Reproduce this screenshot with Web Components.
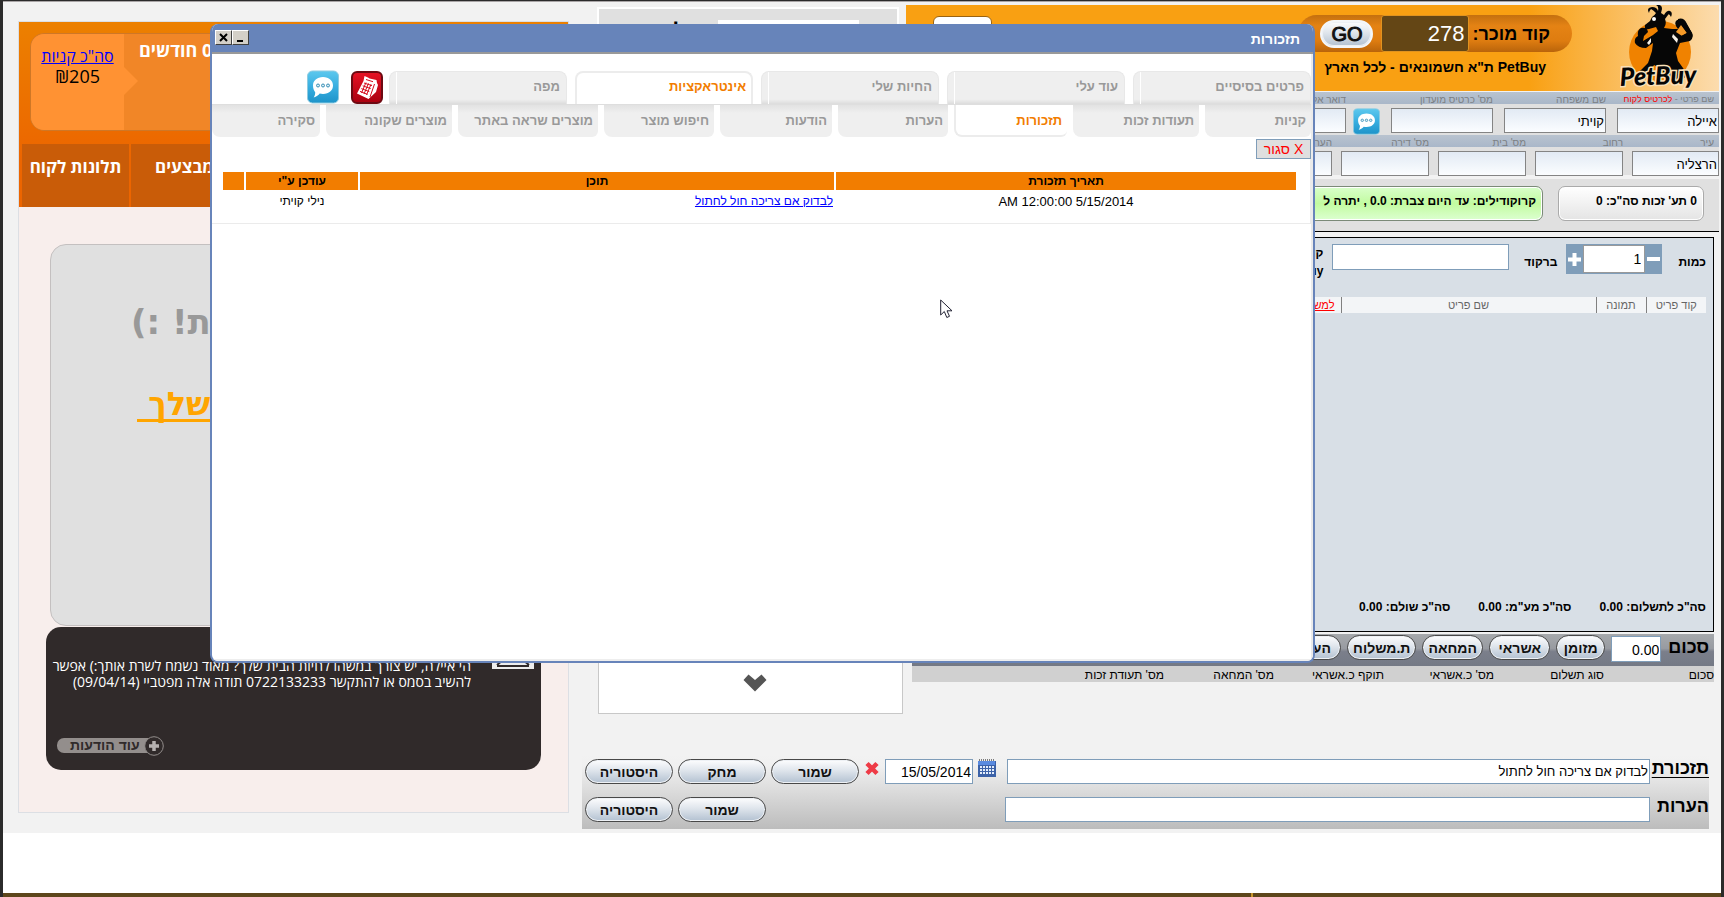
<!DOCTYPE html>
<html lang="he" dir="rtl">
<head>
<meta charset="utf-8">
<title>PetBuy</title>
<style>
html,body{margin:0;background:#fff}
body{font:13px/16px "Liberation Sans",Arial,sans-serif;color:#000}
</style>
</head>
<body>
<pet-app></pet-app>
<script>
const BASE = `*{box-sizing:border-box}button,input{font:inherit;color:inherit;margin:0}
input{border-radius:0;outline:0;min-width:0}h1,h2,p{margin:0;font:inherit}`;

function define(name, css, html) {
  const t = document.createElement('template');
  t.innerHTML = `<style>${BASE}${css}</style>${html}`;
  customElements.define(name, class extends HTMLElement {
    constructor() {
      super();
      this.attachShadow({mode: 'open'}).append(t.content.cloneNode(true));
    }
    connectedCallback() {
      const root = this.shadowRoot;
      root.querySelectorAll('[data-text]').forEach(n => n.textContent = this.getAttribute(n.dataset.text) || '');
      root.querySelectorAll('input[data-value]').forEach(n => n.value = this.getAttribute('value') || '');
    }
  });
}

/* glossy rounded button */
define('pill-button', `
:host{display:block;flex:none;width:88px}
button{display:block;width:100%;height:25px;padding:0;border:1px solid #484848;border-radius:13px;
background:linear-gradient(#fdfdfe,#dfe5ec 45%,#b3c1d1);box-shadow:inset 0 0 0 1px #eef1f5;
font:bold 14px/20px "Liberation Sans",sans-serif;white-space:nowrap;color:#111}
:host([kind=go]) button{height:28px;border:2px solid #f4f6f9;border-radius:14px;font:20px/22px "Liberation Sans",sans-serif;-webkit-text-stroke:1px #111}
`, `<button type="button"><slot></slot></button>`);

/* blue square with a speech bubble */
define('chat-icon', `
:host{display:block;flex:none;width:32px;height:34px}
button{display:block;width:100%;height:100%;padding:0;border:0;background:none}
svg{display:block;width:100%;height:100%}
`, `<button type="button" aria-label="SMS"><svg viewBox="0 0 32 34" preserveAspectRatio="none">
<defs><linearGradient id="g" x1="0" y1="0" x2="0" y2="1"><stop offset="0" stop-color="#5cc8ee"/><stop offset=".5" stop-color="#38aee0"/><stop offset="1" stop-color="#1d93c9"/></linearGradient></defs>
<rect x=".5" y="1" width="31" height="32" rx="5" fill="url(#g)" stroke="#8fcbe0"/>
<path d="M16 7c6 0 10 3.600 10 8.500S22 24 16 24c-1.200 0-2.300-.1-3.300-.4-1.200 1.700-3.200 3.200-6 4 1-1.700 1.600-3.600 1.500-5.400C6.800 20.500 6 18.200 6 15.500 6 10.600 10 7 16 7z" fill="#fff"/>
<g fill="#d9eef7" stroke="#3a8fb5"><circle cx="11" cy="15.500" r="1.500"/><circle cx="16" cy="15.500" r="1.500"/><circle cx="21" cy="15.500" r="1.500"/></g></svg></button>`);

define('register-icon', `
:host{display:block;flex:none;width:32px;height:34px}
button{display:block;width:100%;height:100%;padding:0;border:0;background:none}svg{display:block}
`, `<button type="button" aria-label="קופה"><svg width="32" height="34" viewBox="0 0 32 34">
<defs><linearGradient id="g" x1="0" y1="0" x2="0" y2="1"><stop offset="0" stop-color="#e81224"/><stop offset="1" stop-color="#a8000f"/></linearGradient></defs>
<rect x="1" y="2" width="30" height="31" rx="5" fill="url(#g)" stroke="#6d0a12" stroke-width="2"/>
<path d="M13.500 6l3.500 1.500 1.500 1 7 1.500.5 3 1 2L25 22l-7.500 7L6 23.500 12.500 11z" fill="#fff"/>
<path d="M15 9.500l7 2.200M23.500 14l-4.500 13" stroke="#d60b1c" fill="none"/>
<g stroke="#d60b1c" stroke-width="1" fill="none"><path d="M13 13l8 2.600M11.700 15.800l8 2.800M10.300 18.600l8 3M9 21.400l7.500 3"/><path d="M15 12.500L10.500 23M17.500 13.400L13 24M20 14.300L15.500 25"/></g></svg></button>`);

/* caption on the blue strip, text box under it */
define('card-field', `
:host{display:block;flex:none;width:102px}
label{display:block;height:12px;font-size:10px;line-height:15px;color:#7c8083;white-space:nowrap}
input{display:block;width:100%;height:25px;margin-top:4px;border:1px solid #848484;padding:1px 1px 0;background:linear-gradient(#e2eaf4,#fbfdff);font-size:13px}
:host([first]) label{padding-right:5px;font-size:9px}
:host([narrow]){width:88px}
:host([narrow]) label{font-size:10px}
:host([wide]){flex:1;width:auto}
`, `<label for="i"><span data-text="label"></span> <slot></slot></label><input id="i" data-value>`);

define('pet-logo', `
:host{display:block;flex:none;width:84px;height:86px}svg{display:block}
text{font:italic 900 25px Lato,"Open Sans",sans-serif}
`, `<svg width="84" height="86" viewBox="0 0 84 86" role="img" aria-label="PetBuy">
<circle cx="40" cy="47" r="31" fill="#f08200"/>
<path d="M25 20L30 16 32 12Q35 10 36 8 33 5 31 4 29 6 29 8 26 3 32 2 37 2 38 6 39 1 36 0 42-1 42 4L41 8 44 10Q47 5 50 6 53 7 51 12 49 8 48 10L45 14Q47 19 44 23L52 24 58 24Q53 18 57 15 63 13 66 18L72 28Q74 33 70 36L60 38 56 48 58 56 68 70 60 76 46 74 42 64 34 60 28 70 18 74 16 70 28 58 32 46 33 38 26 43Q18 43 15 38 14 33 18 31 17 25 21 23 27 22 28 27L24 31 23 36 33 30 38 26 36 22 29 24Q24 25 25 20z" fill="#060606"/>
<path d="M61 20l6 8-5 3-6-4z" fill="#f59a28"/><path d="M58 14q6-2 9 5l5 9q2 5-3 7l-9 1-5-8 6 3 6-3-6-9-3-1z" fill="#060606"/>
<circle cx="34" cy="14" r="2" fill="#fff"/><path d="M53 29l5 5-1 4-5-6zM27 38l4-5 0 4-2 3z" fill="#f5efe6"/>
<text x="0" y="81" fill="#050505" stroke="#fbe0b8" stroke-width="3" paint-order="stroke" transform="rotate(-2 0 80)" direction="ltr">PetBuy</text>
</svg>`);

/* orange customer card on the left */
define('summary-panel', `
:host{display:flex;flex-direction:column;border:1px solid #dcdfe4;background:#f8eeec;height:792px}
header{flex:none;height:185px;background:linear-gradient(#ec8000,#ec6500 75%)}
.sum{display:flex;direction:ltr;height:98px;margin:11px 11px 0;border:1px solid #cf7726;border-radius:14px;background:#f18627;overflow:hidden}
.total{position:relative;flex:none;width:93px;padding:12px 0;background:#ff9233;text-align:center;direction:rtl;font:16px/20px "Open Sans",sans-serif}
.total a{color:#00f}.total span{font-size:18px}
.total::after{content:"";position:absolute;left:100%;top:33px;border:14px solid transparent;border-left-color:#ff9233;border-right:0}
.months{padding:4px 15px;font:bold 18px/24px "Open Sans",sans-serif;color:#fff;direction:rtl;white-space:nowrap}
nav{display:flex;direction:ltr;gap:2px;margin:13px 3px 0;height:63px}
nav a{flex:1;background:#c95c08;color:#fff;text-decoration:none;text-align:center;font:bold 17px/46px "Open Sans",sans-serif}
.greet{flex:none;height:382px;margin:37px 31px 0;border:1px solid #c4c0c0;border-radius:16px;background:#e0e0e0;padding:52px 80px 0;direction:ltr;font:bold 34px/50px "DejaVu Sans",sans-serif;color:#999}
.greet p{direction:rtl;width:max-content}
.greet a{display:block;width:max-content;direction:rtl;margin:32px 6px 0;color:orange;font-size:32px;white-space:pre;text-decoration-thickness:3px;text-underline-offset:4px;text-decoration-skip-ink:none}
.msg{flex:none;display:flex;flex-direction:column;height:143px;margin:1px 27px 0;border-radius:15px;background:#302a2a;color:#fff;padding:10px 7px 14px 4px}
.top{display:flex;align-items:flex-start;gap:21px;flex:1}
.top p{flex:1;padding-top:21px;font:14px/16px "Open Sans",sans-serif}
.top svg{flex:none;margin-top:4px}
button{align-self:flex-end;display:flex;align-items:center;margin-left:7px;padding:0;border:0;background:none;color:#302a2a;height:21px}
button b{font:bold 14px/15px "Liberation Sans",sans-serif;background:#938e8c;border-radius:7px 0 0 7px;padding:0 8px 0 13px;margin-right:-4px}
button svg{position:relative}
`, `<header><div class="sum"><div class="total"><a href="#buys">סה"כ קניות</a><br><span>₪205</span></div><div class="months">0 חודשים</div></div>
<nav><a href="#complaints">תלונות לקוח</a><a href="#deals">מבצעים</a><a href="#a" aria-label="א"></a><a href="#b" aria-label="ב"></a><a href="#c" aria-label="ג"></a></nav></header>
<section class="greet"><p>ת! :)</p><a href="#pets">שלך </a></section>
<section class="msg"><div class="top"><svg width="42" height="28" viewBox="0 0 42 28"><rect width="42" height="28" fill="#ededed"/><path d="M3 4l18 14L39 4M5 24l12-10M37 24L25 14M5 25h32" stroke="#302a2a" stroke-width="2" fill="none"/></svg>
<p>הי איילה, יש צורך במשהו לחיות הבית שלך? מאוד נשמח לשרת אותך:) אפשר להשיב בסמס או להתקשר 0722133233 תודה אלה מפטביי (09/04/14)</p></div>
<button type="button"><svg width="20" height="20" viewBox="0 0 20 20"><circle cx="10" cy="10" r="9.300" fill="#302a2a" stroke="#938e8c"/><path d="M10 5v10M5 10h10" stroke="#b5b1b0" stroke-width="3.500"/></svg><b>עוד הודעות</b></button></section>`);

/* narrow results column */
define('search-column', `
:host{display:flex;flex-direction:column;height:707px}
.find{flex:none;display:flex;gap:32px;margin-left:-1px;margin-right:4px;height:120px;border:2px solid #fff;background:#e0e0e0;padding:11px 38px 0 0}
.find input{flex:none;width:141px;height:22px;border:0;background:#fff}
.find label{order:2;font:bold 22px/24px "Liberation Sans",sans-serif}
.list{flex:1;display:flex;align-items:flex-end;justify-content:center;border:1px solid #c8c8c8;background:#fff;padding:0 0 21px 8px}
`, `<div class="find"><label for="q">ל</label><input id="q"></div>
<div class="list"><svg width="24" height="18" viewBox="0 0 24 18"><path d="M5.500 0.500L12 6l6.500-5.500L23.500 6 12 17.500.5 6z" fill="#555"/></svg></div>`);

define('seller-bar', `
:host{display:flex;height:86px;padding-right:15px;background:linear-gradient(to left,#fcdcae,#f9a012 190px)}
.who{margin-right:48px;flex:none}
.code{display:flex;align-items:center;height:37px;margin-top:10px;padding:0 22px 0 22px;border-radius:19px;background:linear-gradient(#c4700f,#e58314 30%,#de7c10 70%,#b9640b);font:bold 18px/20px "Liberation Sans",sans-serif}
.code input{width:88px;height:37px;margin:0 3px 0 8px;border:1px solid #e0931f;border-radius:3px;background:#644615;color:#fff;font:22px/24px "Liberation Sans",sans-serif;padding:0 4px}
.who p{margin:4px 26px 0 0;font:bold 14px/22px "Liberation Sans",sans-serif;white-space:nowrap}
.peek{flex:1;display:flex;gap:60px;padding:17px 53px 0 0;font:bold 18px/22px "Liberation Sans",sans-serif}
.blank{flex:none;width:59px;height:28px;margin:11px 0 0 27px;border:1px solid #9a6312;border-radius:6px;background:#fff}
pill-button{width:53px}
`, `<pet-logo></pet-logo><div class="who"><div class="code"><label for="c">קוד מוכר:</label><input id="c" value="278"><pill-button kind="go">GO</pill-button></div>
<p>PetBuy ת"א חשמונאים - לכל הארץ</p></div><div class="peek"><span>ל</span><span>ל</span></div><button class="blank" type="button" aria-label="יציאה"></button>`);

define('customer-card', `
:host{display:block;margin-top:1px}
.row{display:flex;height:43px;background:linear-gradient(#b9c3cf,#a9b7c9 12px,#e0e0e0 12px)}
.a{gap:11px}.b{gap:9px;height:40px}
.a chat-icon{width:27px;height:27px;margin-top:16px;margin-left:-4px}
.a a{color:red;text-decoration:none}
card-field[narrow][first]{width:87px}
`, `<div class="row a"><card-field first label="שם פרטי -" value="איילה"><a href="#card">לכרטיס לקוח</a></card-field><card-field label="שם משפחה" value="קויתי"></card-field><card-field label="מס' כרטיס מועדון"></card-field><chat-icon></chat-icon><card-field wide label="דואר אלקטרוני"></card-field></div>
<div class="row b"><card-field narrow first label="עיר" value="הרצליה"></card-field><card-field narrow label="רחוב"></card-field><card-field narrow label="מס' בית"></card-field><card-field narrow label="מס' דירה"></card-field><card-field wide label="הערות"></card-field></div>`);

define('credit-bar', `
:host{display:flex;gap:15px;height:53px;margin-top:4px;padding:7px 15px 0 6px;border-bottom:1px solid #000;background:#e0e0e0}
p{height:35px;padding:0 6px;border:1px solid #aaa;border-radius:7px;box-shadow:inset 0 0 0 1px #fff;background:linear-gradient(#fff,#e4e4e4);font:bold 12px/28px "Liberation Sans",sans-serif;white-space:nowrap}
.c{flex:none;width:146px}
.g{flex:1;overflow:hidden;border-color:#7b8a78;background:linear-gradient(#d9ffcb,#c2fba0 50%,#dcffd0)}
`, `<p class="c">0 תע' זכות סה"כ: 0</p><p class="g">קרוקודילים: עד היום צברת: 0.0 , יתרה ל</p>`);

define('sale-box', `
:host{display:flex;flex-direction:column;height:395px;margin:5px 5px 0 6px;border:1px solid #000;background:#d8dfe6;padding:6px 7px 0;font:bold 12px/16px "Liberation Sans",sans-serif}
.in{display:flex;height:53px;align-items:flex-start}
.in>label{padding-top:10px}
.qty{display:flex;align-items:center;height:30px;width:96px;margin:0 16px 0 9px;background:#7f9db9}
.qty input{width:62px;height:28px;border:1px solid #999;padding:0 3px;background:#fff;font:14px/16px "Liberation Sans",sans-serif}
.qty button{flex:1;padding:0;border:0;background:none;color:#fff;height:30px}
.qty svg{display:block;margin:auto}
.bar{width:177px;height:26px;margin:0 15px 0 9px;border:1px solid #7f9db9;background:#fff}
.in .two{padding-top:0;line-height:18px}
table{border-collapse:collapse;width:100%;table-layout:fixed;color:#666}
th{height:16px;padding:0 6px;background:#f3f5f7;border-left:1px solid #808080;font:11px/16px "Liberation Sans",sans-serif;white-space:nowrap}
th a{color:red}
.sums{display:flex;gap:28px;margin-top:auto;padding-bottom:16px}
`, `<div class="in"><label for="n">כמות</label><div class="qty"><button type="button" aria-label="פחות"><svg width="13" height="4"><rect width="13" height="4" fill="#fff"/></svg></button><input id="n" value="1"><button type="button" aria-label="עוד"><svg width="13" height="13"><path d="M6.500 0v13M0 6.500h13" stroke="#fff" stroke-width="4"/></svg></button></div>
<label for="b">ברקוד</label><input id="b" class="bar"><label class="two">קוד<br>PetBuy</label></div>
<table><thead><tr><th style="width:60px">קוד פריט</th><th style="width:50px">תמונה</th><th style="width:255px">שם פריט</th><th style="text-align:right"><a href="#pull">למשיכה</a></th></tr></thead></table>
<div class="sums"><span>סה"כ לתשלום: 0.00</span><span>סה"כ מע"מ: 0.00</span><span>סה"כ שולם: 0.00</span></div>`);

define('pay-box', `
:host{display:block;margin:2px 5px 0 6px}
.bar{display:flex;height:32px;gap:6px;padding:1px 5px 0 0;background:linear-gradient(#a6a9ac,#989ba1 45%,#7b7f8b 55%,#747985)}
label{font:bold 18px/24px "Liberation Sans",sans-serif}
input{width:50px;height:26px;margin:1px 1px 0 0;border:1px solid #7f9db9;background:#fff;padding:2px 1px 0;font-size:14px}
pill-button{width:61px}
table{width:100%;border-collapse:collapse;table-layout:fixed;background:#d0d0d0}
th{width:110px;padding:2px 0 0;height:16px;text-align:right;font:12px/14px "Liberation Sans",sans-serif;white-space:nowrap}
th:last-child{width:auto}
`, `<div class="bar"><label for="s">סכום</label><input id="s" value="0.00"><pill-button style="width:49px">מזומן</pill-button><pill-button>אשראי</pill-button><pill-button>המחאה</pill-button><pill-button style="width:69px">ת.משלוח</pill-button><pill-button>הערות</pill-button></div>
<table><thead><tr><th>סכום</th><th>סוג תשלום</th><th>מס' כ.אשראי</th><th>תוקף כ.אשראי</th><th>מס' המחאה</th><th>מס' תעודת זכות</th><th></th></tr></thead></table>`);

define('notes-box', `
:host{display:flex;flex-direction:column;gap:13px;margin:41px 10px 0 0;height:74px;padding:4px 0 0 3px;background:linear-gradient(#f2f2f2,#f0f0f0 15%,#bcbcbc)}
.r{display:flex;gap:5px}
.r>label{flex:none;width:59px;font:bold 18px/19px "Liberation Sans",sans-serif;white-space:nowrap}
.r>label.u{text-decoration:underline;text-underline-offset:3px}
input{height:25px;border:1px solid #7f9db9;background:#fff;padding:0 1px;font-size:13px}
.t{flex:1;margin-right:-5px}
.d{width:88px;font-size:14px}
.cal{margin-right:6px}
.gap{flex:none;width:229px}
svg{flex:none}
`, `<div class="r"><label class="u" for="a">תזכורת</label><input id="a" class="t" value="לבדוק אם צריכה חול לחתול">
<svg class="cal" width="18" height="18" viewBox="0 0 18 18"><path d="M0 2h18v16H0z" fill="#3c62a8"/><path d="M0 2h17v4H0z" fill="#5a8be0"/><path d="M1 1h15" stroke="#555" stroke-width="1.500" stroke-dasharray="1 1"/><g fill="#e4edfb"><path d="M2 7h2v2H2zM5 7h2v2H5zM8 7h2v2H8zM11 7h2v2h-2zM14 7h2v2h-2zM2 10h2v2H2zM5 10h2v2H5zM8 10h2v2H8zM11 10h2v2h-2zM14 10h2v2h-2zM2 13h2v2H2zM5 13h2v2H5zM8 13h2v2H8zM11 13h2v2h-2zM14 13h2v2h-2z"/></g></svg>
<input class="d" aria-label="תאריך" value="15/05/2014"><svg width="16" height="19" viewBox="0 0 16 19"><path d="M3 4.500l10 10M13 4.500l-10 10" stroke="#ee3b46" stroke-width="4.500"/></svg><pill-button>שמור</pill-button><pill-button>מחק</pill-button><pill-button>היסטוריה</pill-button></div>
<div class="r"><label for="b">הערות</label><input id="b" class="t"><span class="gap"></span><pill-button>שמור</pill-button><pill-button>היסטוריה</pill-button></div>`);

/* tabs stand on the line; sub tabs hang below it */
define('tab-item', `
:host{display:block;flex:none}
a{display:block;height:33px;padding-right:6px;border:1px solid #e8e8e8;border-bottom:0;border-radius:8px 8px 0 0;background:linear-gradient(to right,transparent 6px,#fff 6px,#fff 7px,transparent 7px),linear-gradient(#efefef 85%,#dcdcdc);
font:bold 13px/29px "Liberation Sans",sans-serif;color:#999;text-decoration:none;white-space:nowrap}
:host([sub]) a{height:32px;padding-right:5px;border:0;border-radius:0 0 6px 8px;background:linear-gradient(#e2e2e2,#efefef 25%);line-height:31px}
:host([on]) a{color:#f27d00;background:#fff;border:2px solid #ececec;border-bottom:0;padding-right:5px;line-height:27px}
:host([sub][on]) a{border:2px solid #ececec;border-top:0;border-right:0;padding-right:5px;line-height:31px}
`, `<a href="#tab"><slot></slot></a>`);

define('reminder-window', `
:host{display:flex;flex-direction:column;border:2px solid #6784ba;border-top:0;border-radius:8px;background:#fff;overflow:hidden}
header{flex:none;display:flex;align-items:center;justify-content:space-between;height:30px;border-bottom:2px solid #999;background:#6784ba;padding:2px 13px 0 3px;color:#fff}
h1{font:bold 14px/18px "Liberation Sans",sans-serif}
.ctl{display:flex;direction:ltr;margin-top:-3px}
.ctl button{width:17px;height:15px;padding:0;border:1px solid;border-color:#fff #404040 #404040 #fff;background:#d4d0c8}
.ctl svg{display:block;margin:auto}
main{flex:1;border-right:2px solid #ebebeb;border-bottom:2px solid #eee;padding-top:16px}
`, `<header><h1><slot name="title"></slot></h1><div class="ctl"><button type="button" aria-label="סגירה"><svg width="9" height="9"><path d="M1 1l7 7M8 1L1 8" stroke="#000" stroke-width="2"/></svg></button><button type="button" aria-label="מזעור"><svg width="9" height="9"><path d="M1 8h6" stroke="#000" stroke-width="2"/></svg></button></div></header><main><slot></slot></main>`);

define('reminder-tabs', `
:host{display:block}
nav{display:flex}
.one{align-items:flex-end;gap:8px;height:35px;border-bottom:1px solid #dedede}
.one tab-item{width:178px}
register-icon{margin-right:-2px}chat-icon{margin-right:4px}
.two{gap:6px}
.two tab-item:last-child{flex:1}
`, `<nav class="one"><tab-item>פרטים בסיסיים</tab-item><tab-item>עוד עלי</tab-item><tab-item>החיות שלי</tab-item><tab-item on>אינטראקציות</tab-item><tab-item>מפה</tab-item><register-icon></register-icon><chat-icon></chat-icon></nav>
<nav class="two"><tab-item sub style="width:106px">קניות</tab-item><tab-item sub style="width:126px">תעודות זכות</tab-item><tab-item sub on style="width:113px">תזכורות</tab-item><tab-item sub style="width:110px">הערות</tab-item><tab-item sub style="width:112px">הודעות</tab-item><tab-item sub style="width:110px">חיפוש מוצר</tab-item><tab-item sub style="width:140px">מוצרים שראה באתר</tab-item><tab-item sub style="width:126px">מוצרים שקונה</tab-item><tab-item sub>סקירה</tab-item></nav>`);

define('reminder-table', `
:host{display:block;margin-top:2px}
button{display:block;width:55px;height:20px;padding:0;border:1px solid #7f9db9;background:#dfdfdf;color:red;font:14px/17px "Liberation Sans",sans-serif}
.w{border:solid #ebebeb;border-width:0 1px 1px 0;padding:13px 12px 10px 9px}
table{width:100%;table-layout:fixed;border-spacing:2px 0}
th{height:18px;padding:0;background:#f27d00;font:bold 12px/18px "Liberation Sans",sans-serif}
td{height:23px;padding:0;text-align:center;font:13px/23px "Liberation Sans",sans-serif}
td.s{text-align:right;padding-right:1px;font-size:12px}td.m{font-size:12px}
a{color:#00f}
`, `<button type="button">X סגור</button><div class="w"><table><thead><tr><th>תאריך תזכורת</th><th style="width:474px">תוכן</th><th style="width:112px">עודכן ע"י</th><th style="width:21px"></th></tr></thead><tbody><tr><td>5/15/2014 12:00:00 AM</td><td class="s"><a href="#r">לבדוק אם צריכה חול לחתול</a></td><td class="m">נילי קויתי</td><td></td></tr></tbody></table></div>`);

define('pet-app', `
:host{display:flex;flex-direction:column;position:relative;min-height:100vh;border:3px solid #2b2b2b;border-width:1px 3px 0;overflow:hidden}
*{box-sizing:border-box}:host{box-sizing:border-box}
.page{display:grid;direction:ltr;grid-template-columns:551px minmax(0,1fr);column-gap:13px;padding:0 2px 4px 15px;border-top:1px solid #a9a5a6;background:#f2f2f2}
.page>*{direction:rtl}
summary-panel{margin-top:19px;align-self:start}
.work{display:grid;grid-template-columns:minmax(0,1fr) 305px 13px;column-gap:3px}
search-column{margin-top:5px}.desk{margin-top:3px}
notes-box{grid-column:1/-1}
footer{height:4px;margin-top:auto;background:linear-gradient(to right,transparent 1248px,#c8962c 1248px,#c8962c 1250px,transparent 1250px),#5d461b}
reminder-window{position:absolute;left:207px;right:406px;top:23px;height:639px;box-sizing:border-box}
.cursor{position:absolute;left:937px;top:298px}
`, `<div class="page"><summary-panel></summary-panel><div class="work"><div class="desk"><seller-bar></seller-bar><customer-card></customer-card><credit-bar></credit-bar><sale-box></sale-box><pay-box></pay-box></div><search-column></search-column><notes-box></notes-box></div></div>
<footer></footer>
<reminder-window><span slot="title">תזכורות</span><reminder-tabs></reminder-tabs><reminder-table></reminder-table></reminder-window>
<svg class="cursor" width="13" height="20" viewBox="0 0 13 20"><path d="M.7 1v15l3.600-3.500L6.800 18.500l2.700-1.200L7 11.800h5z" fill="#fff" stroke="#223"/></svg>`);
</script>
</body>
</html>
